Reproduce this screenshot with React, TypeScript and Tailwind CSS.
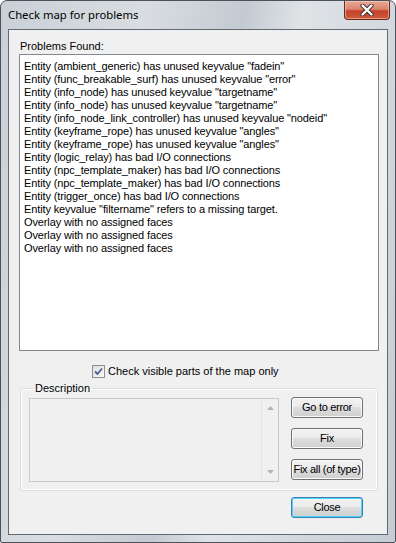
import React from "react";

const problems = [
  'Entity (ambient_generic) has unused keyvalue "fadein"',
  'Entity (func_breakable_surf) has unused keyvalue "error"',
  'Entity (info_node) has unused keyvalue "targetname"',
  'Entity (info_node) has unused keyvalue "targetname"',
  'Entity (info_node_link_controller) has unused keyvalue "nodeid"',
  'Entity (keyframe_rope) has unused keyvalue "angles"',
  'Entity (keyframe_rope) has unused keyvalue "angles"',
  "Entity (logic_relay) has bad I/O connections",
  "Entity (npc_template_maker) has bad I/O connections",
  "Entity (npc_template_maker) has bad I/O connections",
  "Entity (trigger_once) has bad I/O connections",
  'Entity keyvalue "filtername" refers to a missing target.',
  "Overlay with no assigned faces",
  "Overlay with no assigned faces",
  "Overlay with no assigned faces",
];

function Button({ label, primary }: { label: string; primary?: boolean }) {
  return (
    <button
      className={[
        "w-[72px] h-[21px] px-0 rounded-[3px] border text-[11px] leading-none text-black whitespace-nowrap tracking-[-0.3px]",
        "bg-[linear-gradient(to_bottom,#f2f2f2_0%,#ebebeb_45%,#dddddd_50%,#cfcfcf_100%)]",
        primary
          ? "border-[#3c7fb1] shadow-[inset_0_0_0_1px_#48d7fb]"
          : "border-[#707070] shadow-[inset_0_0_0_1px_#fbfbfb]",
      ].join(" ")}
    >
      {label}
    </button>
  );
}

export default function App() {
  return (
    <div className="w-[396px] h-[543px] font-['Liberation_Sans',Arial,sans-serif] bg-white">
      <div className="w-[396px] h-[543px] rounded-t-[7px] rounded-b-[2px] border border-[#4c5259] bg-[linear-gradient(100deg,#c9d0d7_0%,#d9dde1_30%,#c3cad1_50%,#dfe3e6_62%,#c4ccd4_100%)] flex flex-col">
        {/* Title bar */}
        <div className="h-[28px] flex items-start justify-between">
          <span className="pl-[7px] pt-[6px] text-[11.3px] text-black font-['Noto_Sans',sans-serif] leading-[16px]">
            Check map for problems
          </span>
          <div className="mr-[5px] w-[46px] h-[19px] rounded-b-[4px] border border-t-0 border-[#6b2a1f] bg-[linear-gradient(to_bottom,#e9a899_0%,#d98670_45%,#c4432b_55%,#cf5a3c_100%)] shadow-[inset_0_0_0_1px_rgba(255,220,200,0.5)] flex items-center justify-center">
            <svg width="14" height="12" viewBox="0 0 14 12">
              <path d="M2.5 1.5 L11.5 10.5 M11.5 1.5 L2.5 10.5" stroke="#3b2d2a" strokeWidth="4.2" strokeLinecap="round" />
              <path d="M2.5 1.5 L11.5 10.5 M11.5 1.5 L2.5 10.5" stroke="#ffffff" strokeWidth="2.4" strokeLinecap="round" />
            </svg>
          </div>
        </div>

        {/* Client area */}
        <div className="mx-[7px] h-[506px] border border-[#5f6a75] bg-[#f0f0f0] text-[11px] leading-[13px] text-black flex flex-col">
          <div className="pl-[11px] pt-[10px] h-[24px]">Problems Found:</div>
          <div className="ml-[10px] w-[360px] h-[297px] shrink-0 border border-[#828790] bg-white pt-[5px] pl-[4px] tracking-[-0.12px]">
            {problems.map((p, i) => (
              <div key={i} className="h-[13px] whitespace-nowrap">
                {p}
              </div>
            ))}
          </div>

          <div className="mt-[14px] ml-[83px] flex items-center gap-[3px] h-[13px]">
            <div className="w-[13px] h-[13px] border border-[#8f8f8f] bg-[linear-gradient(135deg,#dcdcdc,#fbfbfb)] flex items-center justify-center">
              <svg width="9" height="9" viewBox="0 0 9 9">
                <path d="M1 4.5 L3.5 7 L8 1.5" stroke="#4a5f97" strokeWidth="1.8" fill="none" />
              </svg>
            </div>
            <span>Check visible parts of the map only</span>
          </div>

          <fieldset className="mt-[4px] ml-[11px] w-[358px] border border-[#d5dfe5] rounded-[3px] shadow-[inset_0_0_0_1px_#ffffff] px-[8px] pb-[8px]">
            <legend className="ml-[4px] px-[2px] leading-[13px]">Description</legend>
            <div className="flex gap-[12px] mt-[3px]">
              <div className="w-[250px] h-[84px] border border-[#c9c9c9] bg-[#f0f0f0] flex justify-end">
                <div className="w-[17px] h-full border-l border-[#e6e6e6] flex flex-col justify-between items-center py-[7px]">
                  <svg width="7" height="4" viewBox="0 0 7 4">
                    <path d="M0 4 L3.5 0 L7 4 Z" fill="#b4b4b4" />
                  </svg>
                  <svg width="7" height="4" viewBox="0 0 7 4">
                    <path d="M0 0 L3.5 4 L7 0 Z" fill="#b4b4b4" />
                  </svg>
                </div>
              </div>
              <div className="flex flex-col gap-[10px] -mt-[1px]">
                <Button label="Go to error" />
                <Button label="Fix" />
                <Button label="Fix all (of type)" />
              </div>
            </div>
          </fieldset>

          <div className="mt-[6px] ml-[282px]">
            <Button label="Close" primary />
          </div>
        </div>
      </div>
    </div>
  );
}
